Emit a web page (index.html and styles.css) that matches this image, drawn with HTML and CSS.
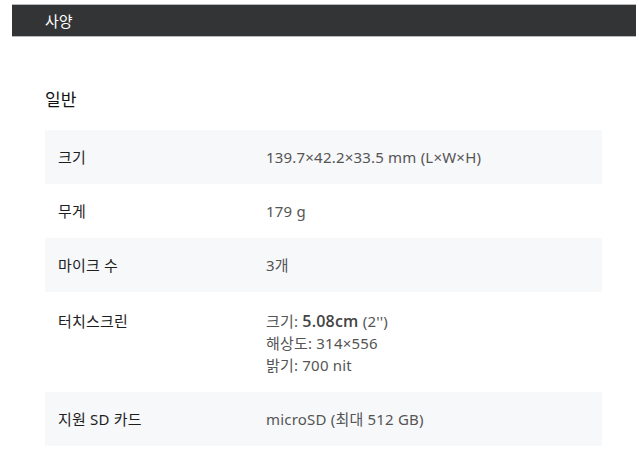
FILE: index.html
```html
<!DOCTYPE html>
<html lang="ko">
<head>
<meta charset="utf-8">
<title>사양</title>
<link rel="stylesheet" href="styles.css">
</head>
<body>
<div class="topbar"><span class="topbar-title">사양</span></div>
<section class="specs">
  <h2 class="group-title">일반</h2>
  <div class="spec-list">
    <div class="row shade"><div class="label">크기</div><div class="value">139.7×42.2×33.5 mm (L×W×H)</div></div>
    <div class="row"><div class="label">무게</div><div class="value">179 g</div></div>
    <div class="row shade"><div class="label">마이크 수</div><div class="value">3개</div></div>
    <div class="row multi"><div class="label">터치스크린</div><div class="value"><div>크기: <strong class="em">5.08cm</strong> (2'')</div><div>해상도: 314×556</div><div>밝기: 700 nit</div></div></div>
    <div class="row shade"><div class="label">지원 SD 카드</div><div class="value">microSD (최대 512 GB)</div></div>
  </div>
</section>
</body>
</html>
```
FILE: styles.css
```css
html, body {
  margin: 0;
  padding: 0;
  background: #fff;
  font-family: "Noto Sans", "Noto Sans CJK KR", sans-serif;
}
.topbar {
  margin: 4px 3px 0 12px;
  height: 31px;
  background: #333436;
  border-top: 1px solid #b9b9b9;
  border-bottom: 1px solid #b9b9b9;
  display: flex;
  align-items: center;
  padding-left: 33px;
}
.topbar-title {
  color: #fff;
  font-size: 15px;
  font-weight: 400;
}
.specs {
  padding: 0 37px 0 45px;
}
.group-title {
  margin: 0;
  height: 77px;
  box-sizing: border-box;
  font-size: 17px;
  font-weight: 400;
  color: #111;
  line-height: 26px;
  padding-top: 50px;
}
.spec-list {
  margin-top: 16px;
}
.row {
  display: flex;
  padding: 16px 0;
  line-height: 22px;
  font-size: 15px;
  letter-spacing: 0.2px;
}
.row.shade {
  background: #f7f8fa;
}
.row.multi {
  padding: 18px 0 16px;
}
.label {
  width: 208px;
  padding-left: 13px;
  color: #1e1e1e;
}
.value {
  color: #555;
}
.multi .value div {
  line-height: 22px;
}
.em {
  font-family: "Open Sans", "Noto Sans", sans-serif;
  font-weight: 600;
  font-size: 16px;
  color: #444;
}
```
